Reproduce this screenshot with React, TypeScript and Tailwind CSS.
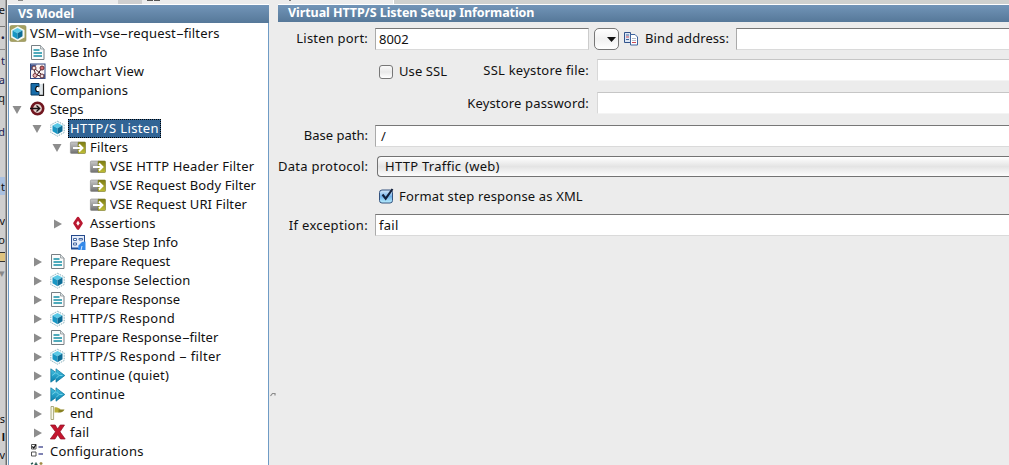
import React from "react";

type IconName = "root" | "doc" | "flow" | "comp" | "steps" | "cube" | "filter" | "assert" | "info" | "next" | "flag" | "fail" | "config" | "spark";

function Icon({ name }: { name: IconName }) {
  return (
    <svg viewBox="0 0 16 16" className="h-4 w-4 shrink-0 overflow-visible">
      <defs>
        <linearGradient id="grey" x1="0" y1="0" x2="0" y2="1">
          <stop offset="0" stopColor="#c9c9c9" /><stop offset="1" stopColor="#707070" />
        </linearGradient>
        <linearGradient id="olive" x1="0" y1="0" x2="0" y2="1">
          <stop offset="0" stopColor="#7d7c14" /><stop offset="1" stopColor="#c0be35" />
        </linearGradient>
        <linearGradient id="aqua" x1="0" y1="0" x2="0" y2="1">
          <stop offset="0" stopColor="#49c3e2" /><stop offset="1" stopColor="#067fae" />
        </linearGradient>
      </defs>
      {name === "root" && (
        <g>
          <rect x="0" y="-0.500" width="16" height="16" rx="1.500" fill="#a5a162" stroke="#8e8a50" strokeWidth="0.600" />
          <path d="M7.800.3l6.700 3.600v7.600l-6.700 3.600-6.700-3.600V3.900z" fill="#f4f8f5" />
        </g>
      )}
      {name === "cube" && <path d="M7.500.3l6.700 3.500v7.700l-6.700 3.700L.8 11.500V3.800z" fill="#fafdfe" stroke="#6c9aa8" strokeWidth="0.800" strokeDasharray="1.500 1" />}
      {(name === "root" || name === "cube") && (
        <g>
          <path d="M7.500 2L12.500 4.600 7.500 7.200 2.500 4.600z" fill="#5cc9e6" />
          <path d="M2.500 4.600l5 2.600v6l-5-2.900z" fill="#1796c3" />
          <path d="M12.500 4.600l-5 2.600v6l5-2.900z" fill="#0b6c96" />
        </g>
      )}
      {name === "doc" && (
        <g>
          <path d="M1.500.5h9l3.500 3.500v10.500H1.500z" fill="#fbfcfc" stroke="#777f84" />
          <path d="M10.500.5V4H14" fill="#dfe4e5" stroke="#8d9599" strokeWidth="0.800" />
          <path d="M3.500 5h6M3.500 8h8.500M3.500 11h8.500" stroke="#168fa5" strokeWidth="1.600" />
        </g>
      )}
      {name === "flow" && (
        <g>
          <rect x="0.500" y="0" width="14.500" height="14.500" fill="#fbf4f3" stroke="#304681" />
          <path d="M1 .5h6L1 6.500zM10 14.500l5-5v5z" fill="#455b94" />
          <path d="M4 4l7 6M4 5l2 7M12 4L7 11l6 2" fill="none" stroke="#3d1b24" />
          <circle cx="4" cy="4" r="2" fill="#f0e3e2" stroke="#642b32" />
          <circle cx="12" cy="4" r="2" fill="#d46b71" stroke="#642b32" />
          <circle cx="5" cy="11.500" r="2" fill="#e6b6b7" stroke="#7a3a40" />
          <circle cx="12" cy="12" r="2" fill="#f0e3e2" stroke="#642b32" />
        </g>
      )}
      {name === "comp" && (
        <g>
          <path d="M9 1h4v11H9z" fill="#dfe6ea" />
          <path d="M1 .5h8V4H6.500L5.500 6l1 2.500H9V12H1z" fill="#176ca9" stroke="#0a3c65" />
          <path d="M8.500 3.500h-2l-1 2.500 1 2.500h2" fill="#fff" stroke="#111" strokeWidth="1.200" />
          <path d="M9 12.300h4.500V.5" fill="none" stroke="#222" strokeWidth="1.200" />
        </g>
      )}
      {name === "steps" && (
        <g>
          <circle cx="7.500" cy="6.500" r="5.700" fill="#e2cfcb" stroke="#711720" strokeWidth="2.600" />
          <path d="M0 6.500h10M6.500 3.500L9.700 6.500l-3.200 3" stroke="#191012" strokeWidth="1.300" fill="none" />
        </g>
      )}
      {name === "filter" && (
        <g>
          <rect x="0.400" y="2" width="9" height="11.500" rx="1" fill="url(#grey)" stroke="#888" strokeWidth="0.600" />
          <rect x="8" y="2" width="7.500" height="11.500" rx="0.800" fill="url(#olive)" stroke="#77762c" strokeWidth="0.600" />
          <path d="M3 8h9.500M9 4.500L12.500 8 9 11.500" fill="none" stroke="#fff" strokeWidth="1.900" />
        </g>
      )}
      {name === "assert" && <path d="M8 2.200l3.400 5.100L8 12.400 4.600 7.300z" fill="#fff8f8" stroke="#b91830" strokeWidth="2.800" strokeLinejoin="round" />}
      {name === "info" && (
        <g>
          <rect x="1.500" y="0.500" width="13" height="13" fill="#e5edfa" stroke="#254a8c" />
          <path d="M3.500 3.500h3v2h-3zM9 3.500h3.500v1.500H9zM3.500 8h3v2h-3z" fill="#fff" stroke="#4769a2" />
          <path d="M8 15l.5-4.500L12 7l3.500-.5V15z" fill="#3489e9" />
          <path d="M11 15l1-4" stroke="#d7e9ff" />
          <path d="M1 13.500h7" stroke="#204d95" strokeWidth="2" />
        </g>
      )}
      {name === "next" && (
        <g fill="url(#aqua)" stroke="#087399" strokeWidth="0.700">
          <path d="M.8.8L6 4.500V.8l8.800 6.700L6 14.200v-3.700L.8 14.200z" />
          <path d="M6 4.500l3 3-3 3M2 7.500L6 4.500M9.500 7.500h3" fill="none" stroke="#8ee2f2" />
        </g>
      )}
      {name === "flag" && (
        <g>
          <path d="M4.500 1.500c3-1 4 1 6 1.500L9 6.500H4.500z" fill="#b8ad35" />
          <path d="M8.500 3.500h6c-1 2.500-3.500 3-6 3z" fill="#878022" />
          <path d="M1 .5v13h2.600V.5z" fill="#f7f7e9" stroke="#96965f" strokeWidth="0.800" />
        </g>
      )}
      {name === "fail" && <path d="M.5 0h4.700l2.500 4 2.500-4h4.300L10 6.800l5.200 7.200h-4.700L7.700 9.700 5 14H.3l5.200-7.200z" fill="#c5152e" stroke="#8e1025" strokeWidth="0.700" />}
      {name === "config" && (
        <g>
          <path d="M1.500 .5h4.500V5H1.500zM1.500 8h4.500V12H1.500z" fill="#fff" stroke="#555" />
          <path d="M2.300 2.500l1.500 1.500L6 .5" stroke="#111" strokeWidth="1.300" fill="none" />
          <path d="M8.500 3H13M8.500 10H13" stroke="#555b9b" strokeWidth="1.300" />
        </g>
      )}
      {name === "spark" && (
        <g>
          <path d="M1 1l2-1M6 -.5v3M4.500 1.500h3" stroke="#2b5b53" strokeWidth="1.500" />
          <path d="M11 -1v3M9.500 .5h3" stroke="#a18b45" strokeWidth="1.300" />
        </g>
      )}
    </svg>
  );
}

type Row = { icon: IconName; label: string; indent: string; track?: string; arrow?: "open" | "closed"; selected?: boolean };

const rows: Row[] = [
  { icon: "root", label: "VSM-with-vse-request-filters", indent: "pl-px", track: "tracking-[0.15px]" },
  { icon: "doc", label: "Base Info", indent: "pl-[21px]" },
  { icon: "flow", label: "Flowchart View", indent: "pl-[21px]", track: "tracking-[0.2px]" },
  { icon: "comp", label: "Companions", indent: "pl-[21px]", track: "tracking-[0.1px]" },
  { icon: "steps", label: "Steps", indent: "pl-[21px]", arrow: "open" },
  { icon: "cube", label: "HTTP/S Listen", indent: "pl-[41px]", track: "tracking-[0.38px]", arrow: "open", selected: true },
  { icon: "filter", label: "Filters", indent: "pl-[61px]", track: "tracking-[0.15px]", arrow: "open" },
  { icon: "filter", label: "VSE HTTP Header Filter", indent: "pl-[81px]", track: "tracking-[0.18px]" },
  { icon: "filter", label: "VSE Request Body Filter", indent: "pl-[81px]", track: "tracking-[0.1px]" },
  { icon: "filter", label: "VSE Request URI Filter", indent: "pl-[81px]", track: "tracking-[0.1px]" },
  { icon: "assert", label: "Assertions", indent: "pl-[61px]", track: "tracking-[0.2px]", arrow: "closed" },
  { icon: "info", label: "Base Step Info", indent: "pl-[61px]" },
  { icon: "doc", label: "Prepare Request", indent: "pl-[41px]", track: "tracking-[-0.07px]", arrow: "closed" },
  { icon: "cube", label: "Response Selection", indent: "pl-[41px]", track: "tracking-[0.14px]", arrow: "closed" },
  { icon: "doc", label: "Prepare Response", indent: "pl-[41px]", track: "tracking-[-0.03px]", arrow: "closed" },
  { icon: "cube", label: "HTTP/S Respond", indent: "pl-[41px]", track: "tracking-[0.28px]", arrow: "closed" },
  { icon: "doc", label: "Prepare Response-filter", indent: "pl-[41px]", track: "tracking-[0.07px]", arrow: "closed" },
  { icon: "cube", label: "HTTP/S Respond - filter", indent: "pl-[41px]", track: "tracking-[0.32px]", arrow: "closed" },
  { icon: "next", label: "continue (quiet)", indent: "pl-[41px]", track: "tracking-[0.18px]", arrow: "closed" },
  { icon: "next", label: "continue", indent: "pl-[41px]", track: "tracking-[0.18px]", arrow: "closed" },
  { icon: "flag", label: "end", indent: "pl-[41px]", arrow: "closed" },
  { icon: "fail", label: "fail", indent: "pl-[41px]", track: "tracking-[0.2px]", arrow: "closed" },
  { icon: "config", label: "Configurations", indent: "pl-[21px]", track: "tracking-[0.22px]" },
  { icon: "spark", label: "", indent: "pl-[21px]" },
];

function Arrow({ state }: { state: "open" | "closed" }) {
  return (
    <svg viewBox="0 0 10 10" className="-ml-[18px] mr-2 h-[10px] w-[10px] shrink-0">
      <path d={state === "open" ? "M.5 1h9L5 9z" : "M2 .5l8 4.500-8 4.500z"} fill="#8d8d8d" />
    </svg>
  );
}

function WideHyphens({ text }: { text: string }) {
  return text.split("-").map((part, i) => (
    <React.Fragment key={i}>
      {i > 0 && <span className="inline-block w-[7.800px] scale-x-[1.900] text-center tracking-normal">-</span>}
      {part}
    </React.Fragment>
  ));
}

const edge = [
  { ch: "e", box: "h-[15px] mt-[2px]" },
  { ch: "", box: "h-px mt-[9px] bg-[#777]" },
  { ch: "•", box: "h-[15px] mt-[3px] text-[#224]" },
  { ch: "", box: "h-px mt-[4px] bg-[#888]" },
  { ch: "t", box: "h-[15px] mt-[3px] text-[#225]" },
  { ch: "a", box: "h-[15px] mt-[4px] text-[#225]" },
  { ch: "q", box: "h-[15px] mt-[3px]" },
  { ch: "d", box: "h-[15px] mt-[19px] text-[#225]" },
  { ch: "t", box: "h-[18px] mt-[38px] bg-[#a9c0e0]" },
  { ch: "v", box: "h-[15px] mt-[18px]" },
  { ch: "o", box: "h-[15px] mt-[4px]" },
  { ch: "", box: "h-[10px] mt-[5px] border-y border-[#333] bg-[#dfc47f]" },
  { ch: "▾", box: "h-[12px] mt-[4px] text-[#888]" },
  { ch: "s", box: "h-[15px] mt-[133px]" },
  { ch: "l", box: "h-[15px] mt-[3px] font-bold" },
  { ch: "v", box: "h-[15px] mt-[3px]" },
];

const titleBar = "flex shrink-0 items-center bg-linear-to-b from-[#7295b8] to-[#567899] pl-[10px] text-[12.500px] font-bold text-white";
const field = "h-[22px] border-t border-l border-t-[#777] border-l-[#aaa] border-b border-b-[#dadada] bg-white px-[3px] leading-[21px]";
const faintField = "ml-[8px] h-[22px] flex-1 border-t border-l border-t-[#c6c6c6] border-l-[#d8d8d8] border-b border-b-[#f4f4f4] bg-white";
const label = "shrink-0 text-right";

export default function App() {
  return (
    <div className="flex h-[465px] w-[1009px] overflow-hidden bg-[#ececec] font-['Noto_Sans','Lucida_Grande',sans-serif] text-[13px] whitespace-nowrap text-[#111]">
      <div className="flex w-2 shrink-0">
        <div className="flex w-[5px] flex-col overflow-hidden bg-[#cfcfcf] text-[11px]">
          {edge.map((e, i) => (
            <div key={i} className={`flex shrink-0 items-center justify-end leading-none ${e.box}`}>{e.ch}</div>
          ))}
        </div>
        <div className="w-px bg-[#a2a2a2]" />
        <div className="w-px bg-[#6c6c6c]" />
        <div className="w-px bg-[#eee]" />
      </div>
      <div className="flex w-[261px] shrink-0 flex-col">
        <div className="flex h-[5px] shrink-0 items-start border-b border-b-white">
          <div className="ml-[10px] h-px w-[5px] bg-[#888]" />
          <div className="ml-[95px] h-[4px] w-6 bg-[#cfcfcf]" />
          <div className="ml-[5px] h-px w-[6px] bg-[#555]" />
          <div className="ml-px h-px w-[6px] bg-[#555]" />
        </div>
        <div className={`${titleBar} h-[18px] tracking-[-0.1px]`}>VS Model</div>
        <div className="flex min-h-0 flex-1 flex-col overflow-hidden border-x border-x-[#6f9bc5] bg-white pt-px">
          {rows.map((r, i) => (
            <div key={i} className={`flex h-[19px] shrink-0 items-center ${r.indent}`}>
              {r.arrow && <Arrow state={r.arrow} />}
              <Icon name={r.icon} />
              <span className={`${r.track ?? ""} ${r.selected ? "ml-[2px] h-[19px] border border-dotted border-black bg-[#316495] px-px leading-[17px] text-white" : "ml-1 leading-[19px]"}`}>
                <WideHyphens text={r.label} />
              </span>
            </div>
          ))}
        </div>
      </div>
      <div className="flex w-[9px] shrink-0 flex-col pt-[392px]">
        <svg viewBox="0 0 6 5" className="ml-px h-[5px] w-[6px]"><path d="M.5 4L2.500 1.500 5 1.500 5 3.500" fill="none" stroke="#8b8b8b" strokeWidth="1.200" /></svg>
      </div>
      <div className="flex min-w-0 flex-1 flex-col">
        <div className="flex h-[5px] shrink-0 items-start border-b border-white">
          <div className="ml-[11px] h-px w-[2px] bg-[#777]" />
          <div className="ml-[102px] h-[4px] flex-1 border-l border-l-white bg-[#cfd1cf]" />
        </div>
        <div className={`${titleBar} h-[17px] tracking-[-0.07px]`}>Virtual HTTP/S Listen Setup Information</div>
        <div className="mt-[6px] flex h-[22px] shrink-0 items-center">
          <span className={`${label} w-[90px] tracking-[0.2px]`}>Listen port:</span>
          <div className={`${field} ml-[7px] w-[214px] border-r border-r-[#ccc]`}>8002</div>
          <div className="ml-[5px] flex h-[22px] w-[25px] items-center justify-end rounded-[5px] border border-[#777] bg-linear-to-b from-white via-[#f1f1f1] to-white pr-[2px]">
            <svg viewBox="0 0 9 5" className="h-[5px] w-[9px]"><path d="M0 0h9L4.500 5z" fill="#111" /></svg>
          </div>
          <svg viewBox="0 0 14 14" className="ml-[5px] h-[14px] w-[14px] shrink-0">
            <path d="M.5.5h6v10h-6z" fill="#dce6f4" stroke="#30528b" />
            <path d="M2 3h3M2 7.500h3" stroke="#3e66a0" />
            <path d="M2 5h3" stroke="#cc4652" />
            <path d="M6.500 2.500h4.500l2.500 2.500v8h-7z" fill="#fff" stroke="#3f659f" />
            <path d="M8 6.500h4M8 8.500h4" stroke="#b1bac8" />
            <path d="M8 10.500h4" stroke="#cc4652" />
          </svg>
          <span className={`${label} w-[91px] tracking-[0.08px]`}>Bind address:</span>
          <div className={`${field} ml-[7px] flex-1`} />
        </div>
        <div className="mt-[9px] flex h-[22px] shrink-0 items-center">
          <div className="ml-[101px] mt-[3px] h-[14px] w-[14px] rounded-[3px] border border-[#777] bg-linear-to-b from-[#fafafa] via-[#e9e9e9] to-white" />
          <span className="mt-[3px] ml-[6px] tracking-[0.1px]">Use SSL</span>
          <span className={`${label} mt-px ml-auto w-[120px] tracking-[0.22px]`}>SSL keystore file:</span>
          <div className="flex w-[420px] shrink-0"><div className={faintField} /></div>
        </div>
        <div className="mt-[11px] flex h-[22px] shrink-0 items-center">
          <span className={`${label} w-[311px] pt-px tracking-[0.17px]`}>Keystore password:</span>
          <div className={faintField} />
        </div>
        <div className="mt-[11px] flex h-[22px] shrink-0 items-center">
          <span className={`${label} w-[90px]`}>Base path:</span>
          <div className={`${field} ml-[7px] flex-1 pl-[5px]`}>/</div>
        </div>
        <div className="mt-[8px] flex h-[22px] shrink-0 items-center">
          <span className={`${label} w-[90px] pt-px tracking-[0.26px]`}>Data protocol:</span>
          <div className="ml-[9px] h-[21px] flex-1 rounded-l-[4px] border border-r-0 border-[#737373] bg-linear-to-b from-white from-0% via-[#e4e4e4] via-50% to-[#fdfdfd] pl-[7px] leading-[19px] tracking-[0.27px]">HTTP Traffic (web)</div>
        </div>
        <div className="mt-[8px] flex h-[22px] shrink-0 items-center">
          <svg viewBox="0 0 16 18" className="ml-[101px] h-[18px] w-4 shrink-0">
            <defs>
              <linearGradient id="check" x1="0" y1="0" x2="0" y2="1">
                <stop offset="0" stopColor="#d7e9fa" /><stop offset="0.500" stopColor="#73b2ea" /><stop offset="1" stopColor="#b9f0ff" />
              </linearGradient>
            </defs>
            <rect x="0.500" y="3" width="13" height="13" rx="2.500" fill="url(#check)" stroke="#34537f" />
            <path d="M3.500 7.500l3.200 4.200L13.500 2" fill="none" stroke="#12203c" strokeWidth="2.100" />
          </svg>
          <span className="ml-[4px] pt-[2px] tracking-[0.15px]">Format step response as XML</span>
        </div>
        <div className="mt-[7px] flex h-[22px] shrink-0 items-center">
          <span className={`${label} w-[90px] pt-[2px] tracking-[0.33px]`}>If exception:</span>
          <div className={`${field} ml-[7px] flex-1 tracking-[0.3px]`}>fail</div>
        </div>
      </div>
    </div>
  );
}
